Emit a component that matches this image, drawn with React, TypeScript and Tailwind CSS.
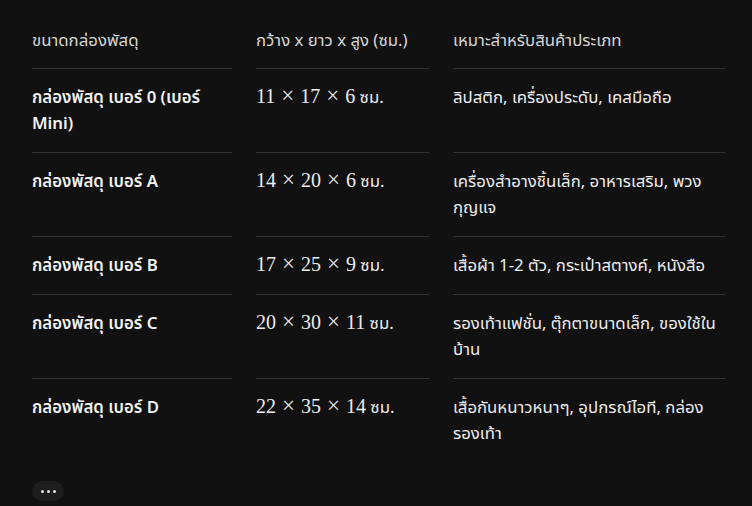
const rows = [
  {
    name: 'กล่องพัสดุ เบอร์ 0 (เบอร์ Mini)',
    size: ['11', '17', '6'],
    use: 'ลิปสติก, เครื่องประดับ, เคสมือถือ',
  },
  {
    name: 'กล่องพัสดุ เบอร์ A',
    size: ['14', '20', '6'],
    use: 'เครื่องสำอางชิ้นเล็ก, อาหารเสริม, พวงกุญแจ',
  },
  {
    name: 'กล่องพัสดุ เบอร์ B',
    size: ['17', '25', '9'],
    use: 'เสื้อผ้า 1-2 ตัว, กระเป๋าสตางค์, หนังสือ',
  },
  {
    name: 'กล่องพัสดุ เบอร์ C',
    size: ['20', '30', '11'],
    use: 'รองเท้าแฟชั่น, ตุ๊กตาขนาดเล็ก, ของใช้ในบ้าน',
  },
  {
    name: 'กล่องพัสดุ เบอร์ D',
    size: ['22', '35', '14'],
    use: 'เสื้อกันหนาวหนาๆ, อุปกรณ์ไอที, กล่องรองเท้า',
  },
];

// ขนาด กxยxส แบบสูตรคณิต
function Dims({ size }: { size: string[] }) {
  return (
    <span>
      <span className="font-['Liberation_Serif',serif] text-[20px] leading-none">
        {size.map((n, i) => (
          <span key={i}>
            {i > 0 && <span className="mx-[6px] text-[23px]">×</span>}
            {n}
          </span>
        ))}
      </span>{' '}
      ซม.
    </span>
  );
}

export default function App() {
  const head = 'border-b border-[#333333] pt-[27px] pb-[15px] text-[#d6d6d6]';

  return (
    <div className="min-h-[506px] bg-[#111111] px-8 font-['Noto_Sans','Noto_Sans_Thai',sans-serif] text-[16.8px] leading-[26px] text-[#ececec]">
      <div className="grid grid-cols-[200px_173px_272px] gap-x-6">
        <div className={head}>ขนาดกล่องพัสดุ</div>
        <div className={head}>กว้าง x ยาว x สูง (ซม.)</div>
        <div className={head}>เหมาะสำหรับสินค้าประเภท</div>

        {rows.map((r, i) => {
          const cell = `pt-[15px] pb-4 ${i < rows.length - 1 ? 'border-b border-[#333333]' : ''}`;
          return (
            <div key={r.name} className="contents">
              <div className={`${cell} font-semibold text-[#f2f2f2]`}>{r.name}</div>
              <div className={cell}>
                <Dims size={r.size} />
              </div>
              <div className={cell}>{r.use}</div>
            </div>
          );
        })}
      </div>

      <div className="mt-[19px] pb-4">
        <button className="flex h-5 w-8 items-center justify-center gap-[3px] rounded-full bg-[#1d1d1d]">
          <span className="h-[3px] w-[3px] rounded-full bg-[#e5e5e5]" />
          <span className="h-[3px] w-[3px] rounded-full bg-[#e5e5e5]" />
          <span className="h-[3px] w-[3px] rounded-full bg-[#e5e5e5]" />
        </button>
      </div>
    </div>
  );
}
